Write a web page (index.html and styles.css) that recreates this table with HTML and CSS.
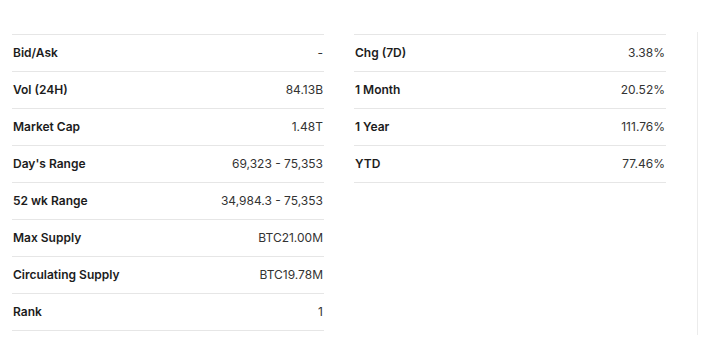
FILE: index.html
```html
<!DOCTYPE html>
<html>
<head>
<meta charset="utf-8">
<link rel="stylesheet" href="styles.css">
</head>
<body>
<div class="page">
  <div class="stats">
    <div class="col">
      <div class="row"><span class="label">Bid/Ask</span><span class="value">-</span></div>
      <div class="row"><span class="label">Vol (24H)</span><span class="value">84.13B</span></div>
      <div class="row"><span class="label">Market Cap</span><span class="value">1.48T</span></div>
      <div class="row"><span class="label">Day's Range</span><span class="value">69,323 - 75,353</span></div>
      <div class="row"><span class="label">52 wk Range</span><span class="value">34,984.3 - 75,353</span></div>
      <div class="row"><span class="label">Max Supply</span><span class="value">BTC21.00M</span></div>
      <div class="row"><span class="label">Circulating Supply</span><span class="value">BTC19.78M</span></div>
      <div class="row"><span class="label">Rank</span><span class="value">1</span></div>
    </div>
    <div class="col">
      <div class="row"><span class="label">Chg (7D)</span><span class="value">3.38%</span></div>
      <div class="row"><span class="label">1 Month</span><span class="value">20.52%</span></div>
      <div class="row"><span class="label">1 Year</span><span class="value">111.76%</span></div>
      <div class="row"><span class="label">YTD</span><span class="value">77.46%</span></div>
    </div>
  </div>
  <div class="aside"></div>
</div>
</body>
</html>
```
FILE: styles.css
```css
html, body {
  margin: 0;
  padding: 0;
  background: #fff;
}
body {
  font-family: Inter, "Noto Sans", sans-serif;
  font-size: 12px;
  color: #1a1a1a;
}
.page {
  display: flex;
  align-items: flex-start;
  padding: 32px 0 0 12px;
}
.stats {
  display: grid;
  grid-template-columns: 312px 312px;
  column-gap: 30px;
  padding-top: 2px;
}
.col {
  display: flex;
  flex-direction: column;
}
.row {
  display: flex;
  justify-content: space-between;
  align-items: center;
  box-sizing: border-box;
  height: 37px;
  border-top: 1px solid #e6e6e6;
  padding: 0 1px 2px;
}
.row:last-child {
  height: 38px;
  border-bottom: 1px solid #e6e6e6;
}
.label {
  font-weight: 600;
  color: #1c1c1c;
}
.value {
  color: #333;
}
.aside {
  margin-left: 31px;
  width: 0;
  height: 303px;
  border-left: 1px solid #ececec;
}
```
